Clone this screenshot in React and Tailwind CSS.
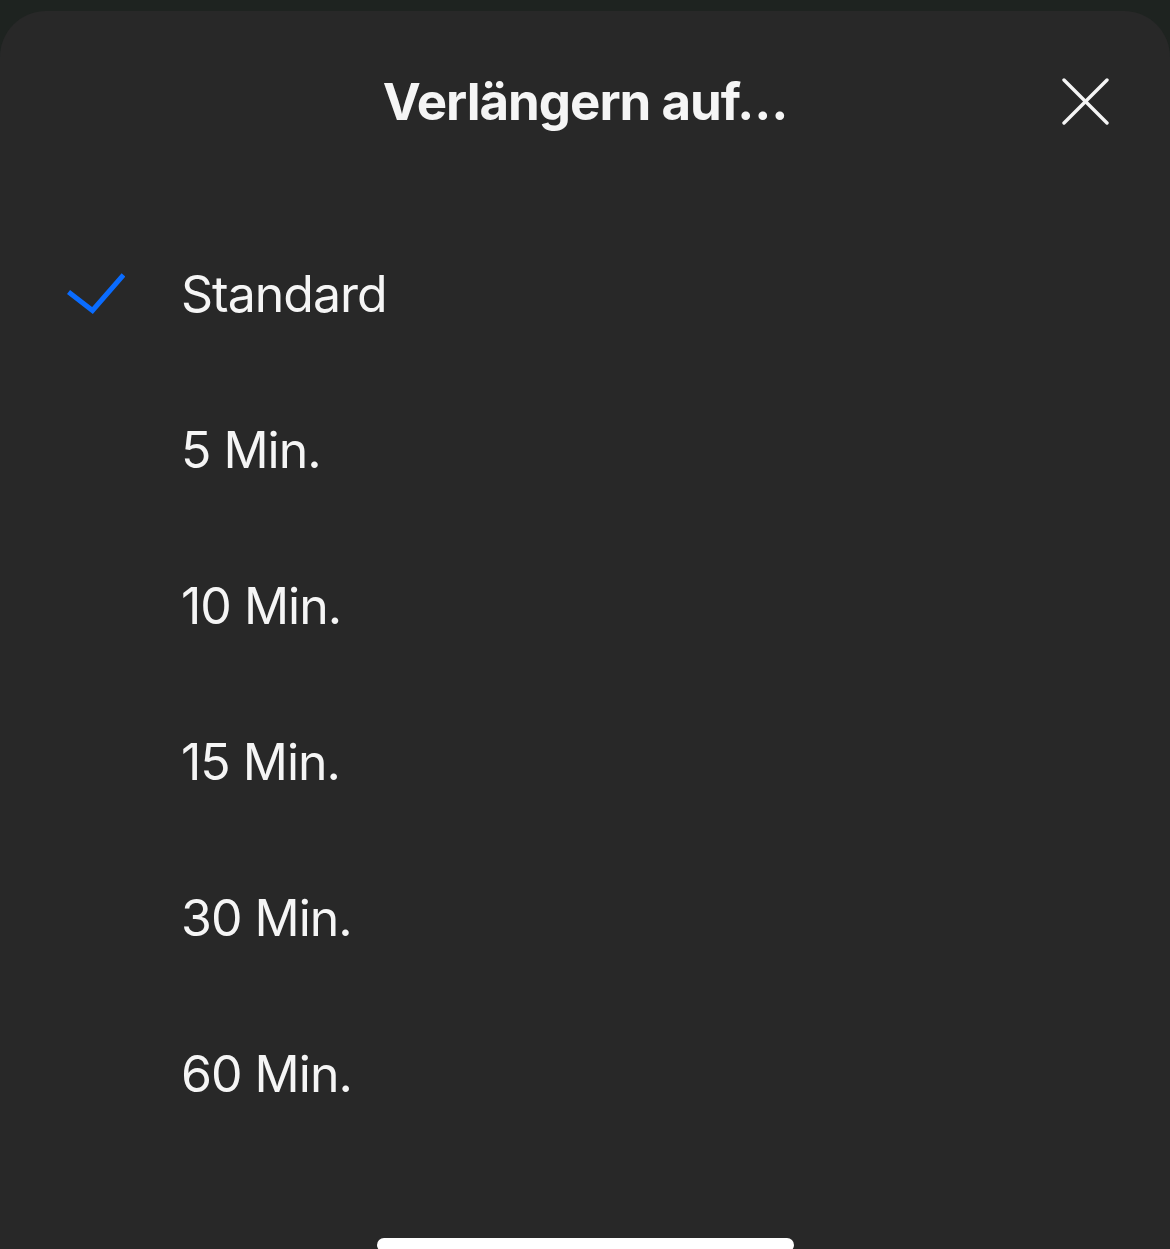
import React from "react";

const items = ["Standard", "5 Min.", "10 Min.", "15 Min.", "30 Min.", "60 Min."];

export default function App() {
  return (
    <div className="w-[1170px] h-[1249px] bg-[#1e2320] pt-[11px] overflow-hidden" style={{ fontFamily: "Inter, 'Noto Sans', sans-serif" }}>
      <div className="relative h-full bg-[#282828] rounded-t-[46px] flex flex-col">
        <div className="relative h-[182px] flex items-center justify-center">
          <h1 className="text-[51px] font-bold text-[#f5f5f5] tracking-[-1px]">Verlängern auf…</h1>
          <button className="absolute left-[1062px] top-[67px] w-[47px] h-[47px]">
            <svg width="47" height="47" viewBox="0 0 47 47" fill="none" stroke="#f5f5f5" strokeWidth="3.4" strokeLinecap="round">
              <line x1="2" y1="2" x2="45" y2="45" />
              <line x1="45" y1="2" x2="2" y2="45" />
            </svg>
          </button>
        </div>
        <ul className="mt-[23px] flex flex-col">
          {items.map((it, i) => (
            <li key={it} className="h-[156px] flex items-center">
              <div className="w-[181px] flex pl-[67px]">
                {i === 0 && (
                  <svg width="58" height="42" viewBox="0 0 58 42" fill="none" stroke="#0a6cff" strokeWidth="5" strokeLinecap="butt" strokeLinejoin="miter">
                    <path d="M1.5 19 L25.5 37.5 L56.5 2" />
                  </svg>
                )}
              </div>
              <span className="text-[50px] text-[#f5f5f5] leading-none tracking-[-1px]">{it}</span>
            </li>
          ))}
        </ul>
        <div className="mt-auto flex justify-center">
          <div className="w-[417px] h-[14px] rounded-full bg-white translate-y-[3px]" />
        </div>
      </div>
    </div>
  );
}
